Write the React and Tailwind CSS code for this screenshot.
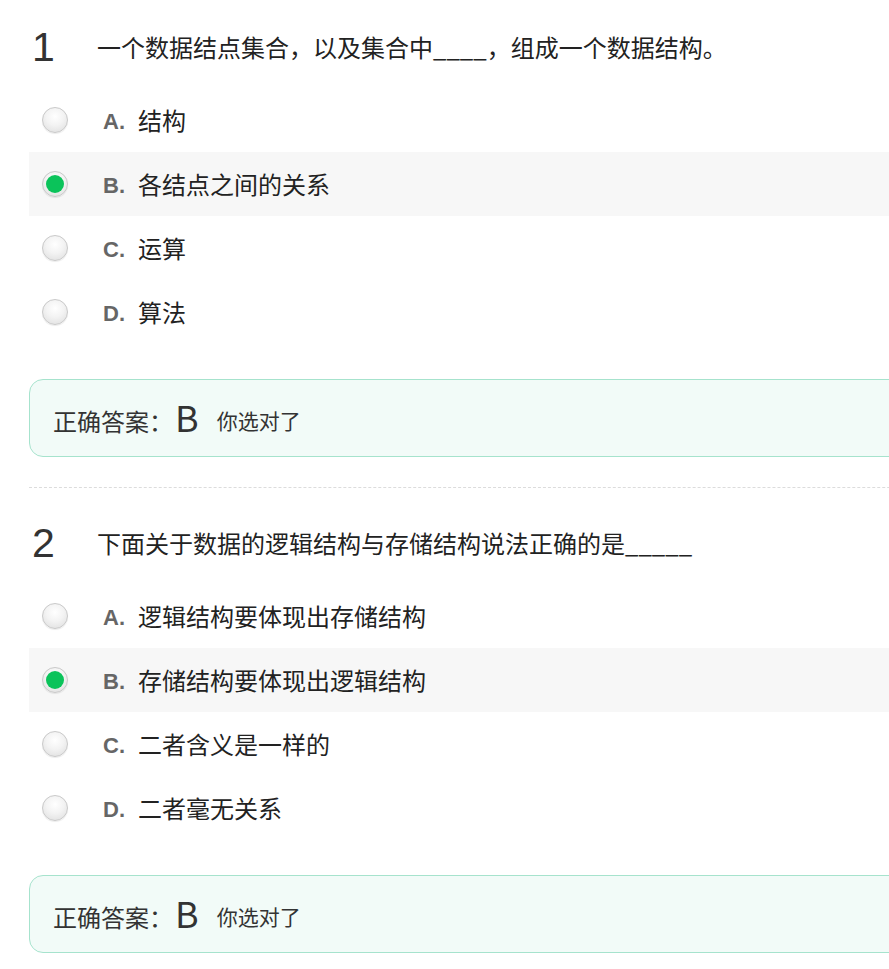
import React from "react";

const questions = [
  {
    n: "1",
    title: "一个数据结点集合，以及集合中____，组成一个数据结构。",
    options: ["结构", "各结点之间的关系", "运算", "算法"],
    selected: 1,
    answer: "B",
  },
  {
    n: "2",
    title: "下面关于数据的逻辑结构与存储结构说法正确的是_____",
    options: ["逻辑结构要体现出存储结构", "存储结构要体现出逻辑结构", "二者含义是一样的", "二者毫无关系"],
    selected: 1,
    answer: "B",
  },
];

const cjk = { fontFamily: '"Noto Sans CJK SC", "Noto Sans", sans-serif' };
const arial = { fontFamily: '"Liberation Sans", Arial, sans-serif' };

function Radio({ checked }) {
  return (
    <div className="w-[26px] h-[26px] rounded-full border border-[#c9c9c9] bg-[radial-gradient(circle_at_50%_35%,#ffffff_0%,#f3f3f3_45%,#dcdcdc_100%)] shadow-[0_1px_1px_rgba(0,0,0,0.08)] flex items-center justify-center shrink-0">
      {checked && <div className="w-[18px] h-[18px] rounded-full bg-[#0bc35a]" />}
    </div>
  );
}

function Question({ q }) {
  const letters = ["A", "B", "C", "D"];
  return (
    <div className="pt-[17px]">
      <div className="h-[60px] flex items-center">
        <div className="w-[68px] pl-[3px] text-[41px] leading-none text-[#333]" style={arial}>
          {q.n}
        </div>
        <div className="text-[24px] leading-none text-[#222]" style={cjk}>
          {q.title}
        </div>
      </div>
      <div className="mt-[11px]">
        {q.options.map((o, i) => (
          <div
            key={i}
            className={
              "h-[64px] flex items-center pl-[13px] " + (i === q.selected ? "bg-[#f7f7f7]" : "")
            }
          >
            <Radio checked={i === q.selected} />
            <div className="ml-[35px] w-[35px] text-[22px] leading-none font-bold text-[#666] mt-[3px]" style={arial}>
              {letters[i]}.
            </div>
            <div className="text-[24px] leading-none text-[#222]" style={cjk}>
              {o}
            </div>
          </div>
        ))}
      </div>
      <div className="mt-[35px] h-[78px] rounded-[14px] border border-[#a6e3cd] bg-[#f2fbf8] flex items-center pl-[23px] text-[#333]" style={cjk}>
        <span className="text-[24px] mt-[6px]">正确答案：</span>
        <span className="text-[36px] leading-none ml-[2px] -mt-[4px]">{q.answer}</span>
        <span className="text-[21px] ml-[18px] mt-[6px]">你选对了</span>
      </div>
    </div>
  );
}

export default function App() {
  return (
    <div className="w-full overflow-hidden bg-white min-h-[969px]">
      <div className="w-[1000px] pl-[29px]">
        <Question q={questions[0]} />
        <div className="mt-[30px] mb-[8px] border-t border-dashed border-[#dcdcdc]" />
        <Question q={questions[1]} />
      </div>
    </div>
  );
}
